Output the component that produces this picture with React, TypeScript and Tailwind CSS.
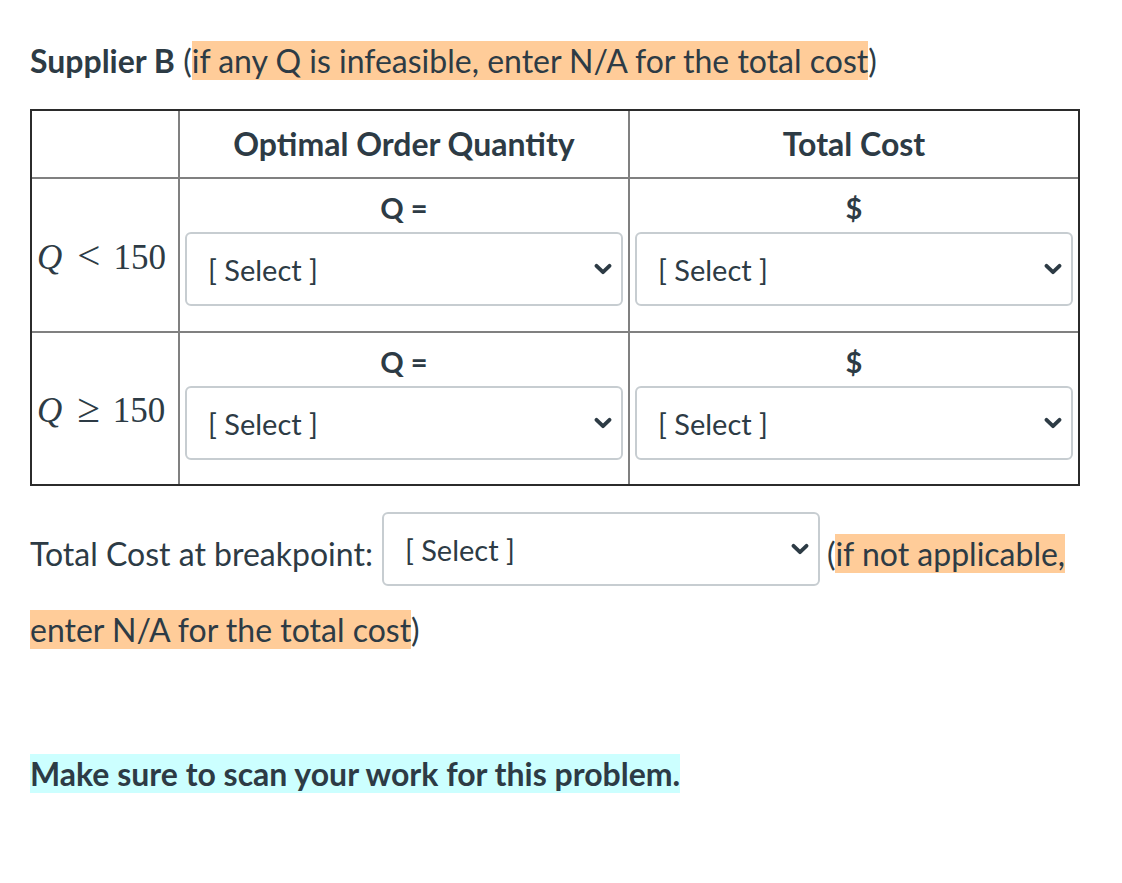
import React from "react";

const Chevron = () => (
  <svg width="18" height="12" viewBox="0 0 18 12" className="shrink-0">
    <path
      d="M2.5 2.8 L9 9.2 L15.5 2.8"
      fill="none"
      stroke="#2d3b45"
      strokeWidth="3.8"
      strokeLinecap="round"
      strokeLinejoin="round"
    />
  </svg>
);

const FakeSelect = () => (
  <div className="flex h-[74px] w-[438px] items-center justify-between rounded-[6px] border-2 border-[#c7cdd1] bg-white pl-[21px] pr-[9px] text-[29px] leading-none">
    <span>[ Select ]</span>
    <Chevron />
  </div>
);

const MathLabel = ({ op }: { op: string }) => (
  <span className="whitespace-nowrap text-[35px] leading-none" style={{ fontFamily: '"Liberation Serif", "Times New Roman", serif' }}>
    <i>Q</i>
    <span className="ml-[15px] mr-[13px] text-[41px]">{op}</span>
    150
  </span>
);

const InputCell = ({ label }: { label: string }) => (
  <div className="flex flex-col items-center pt-[9px]">
    <div className="h-[40px] text-[29px] font-bold leading-[40px]">{label}</div>
    <div className="mt-[4px]">
      <FakeSelect />
    </div>
  </div>
);

export default function App() {
  return (
    <div
      className="min-h-[883px] w-full bg-white pl-[30px] text-[#2d3b45]"
      style={{ fontFamily: 'Lato, "Noto Sans", sans-serif' }}
    >
      <div className="pt-[42px] text-[32px] leading-[38px]">
        <span className="font-bold">Supplier B</span> (
        <span className="bg-[#ffcc99]">if any Q is infeasible, enter N/A for the total cost</span>)
      </div>

      <div className="mt-[29px] w-[1050px] border-2 border-[#2b2b2b]">
        <div className="grid h-[68px] grid-cols-[148px_450px_448px] border-b-2 border-[#808080]">
          <div className="border-r-2 border-[#808080]" />
          <div className="flex items-center justify-center border-r-2 border-[#808080] text-[32px] font-bold">
            Optimal Order Quantity
          </div>
          <div className="flex items-center justify-center text-[32px] font-bold">Total Cost</div>
        </div>

        <div className="grid h-[154px] grid-cols-[148px_450px_448px] border-b-2 border-[#808080]">
          <div className="flex items-center border-r-2 border-[#808080] pl-[5px]">
            <MathLabel op="<" />
          </div>
          <div className="border-r-2 border-[#808080]">
            <InputCell label="Q =" />
          </div>
          <div>
            <InputCell label="$" />
          </div>
        </div>

        <div className="grid h-[151px] grid-cols-[148px_450px_448px]">
          <div className="flex items-center border-r-2 border-[#808080] pl-[5px]">
            <MathLabel op="≥" />
          </div>
          <div className="border-r-2 border-[#808080]">
            <InputCell label="Q =" />
          </div>
          <div>
            <InputCell label="$" />
          </div>
        </div>
      </div>

      <div className="mt-[26px] flex items-start text-[32px] leading-[38px]">
        <span className="mt-[23px] whitespace-nowrap">Total Cost at breakpoint:</span>
        <div className="ml-[9px]">
          <FakeSelect />
        </div>
        <span className="ml-[7px] mt-[23px] whitespace-nowrap">
          (<span className="bg-[#ffcc99]">if not applicable,</span>
        </span>
      </div>

      <div className="mt-[25px] text-[32px] leading-[38px]">
        <span className="bg-[#ffcc99]">enter N/A for the total cost</span>)
      </div>

      <div className="mt-[106px] text-[32px] font-bold leading-[38px]">
        <span className="bg-[#ccffff]">Make sure to scan your work for this problem.</span>
      </div>
    </div>
  );
}
